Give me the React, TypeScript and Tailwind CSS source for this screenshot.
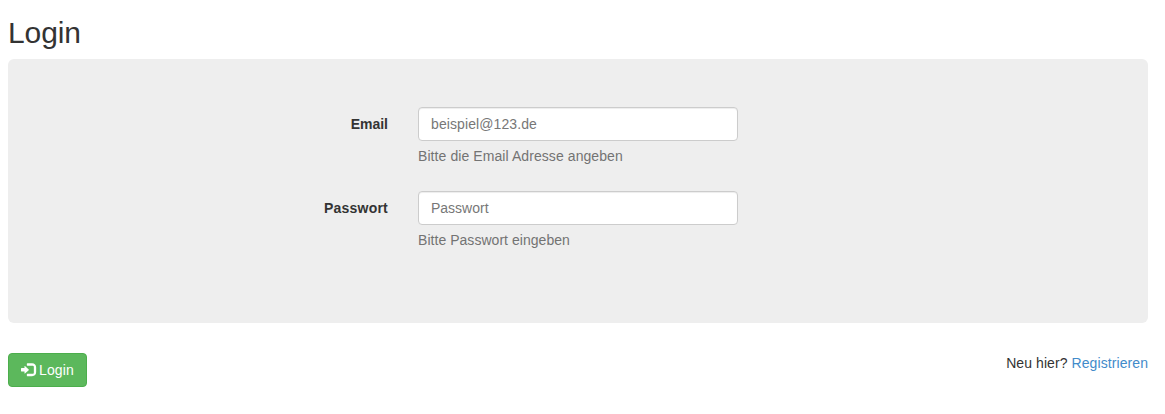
import React from "react";

function Field({ id, label, labelClass, hint, hintClass, type, placeholder, inputClass }: { id: string; label: string; labelClass: string; hint: string; hintClass: string; type: string; placeholder: string; inputClass: string }) {
  return (
    <div className="flex h-[69px]">
      <label htmlFor={id} className={`w-[380px] pt-[7px] text-right font-bold text-[#333] ${labelClass}`}>{label}</label>
      <div className="ml-[30px] w-[320px]">
        <input
          id={id}
          type={type}
          placeholder={placeholder}
          className={`block h-[34px] w-full rounded border border-[#ccc] bg-white px-3 py-1.5 text-[14px] text-[#555] shadow-[inset_0_1px_1px_rgba(0,0,0,0.075)] outline-none placeholder:text-[#777] ${inputClass}`}
        />
        <span className={`mt-[5px] block text-[#737373] ${hintClass}`}>{hint}</span>
      </div>
    </div>
  );
}

export default function App() {
  return (
    <main className="h-[414px] bg-white px-2 pt-4 font-['Liberation_Sans',Arial,sans-serif] text-[14px] leading-5 text-[#333]">
      <h1 className="mb-[10px] h-[33px] text-[30px] leading-[33px] font-medium tracking-[-0.1px]">Login</h1>
      <form className="w-[1140px]">
        <div className="flex h-[264px] flex-col gap-[15px] rounded-md bg-[#eee] pt-12">
          <Field id="email" label="Email" labelClass="tracking-normal" hint="Bitte die Email Adresse angeben" hintClass="tracking-[0.08px]" type="email" placeholder="beispiel@123.de" inputClass="tracking-[0.1px]" />
          <Field id="password" label="Passwort" labelClass="tracking-[0.22px]" hint="Bitte Passwort eingeben" hintClass="tracking-[0.04px]" type="password" placeholder="Passwort" inputClass="tracking-normal" />
        </div>
        <div className="mt-[30px] flex items-start justify-between">
          <button type="button" className="flex h-[34px] w-[79px] items-center gap-[4px] rounded border border-[#4cae4c] bg-[#5cb85c] pl-3 text-white">
            <svg viewBox="0 0 1200 1200" className="h-[14px] w-[14px] shrink-0 overflow-visible" fill="currentColor" aria-hidden="true">
              <path transform="translate(0 1130) scale(1 -1)" d="M550 1100h400q165 0 257.5 -92.5t92.5 -257.5v-400q0 -165 -92.5 -257.5t-257.5 -92.5h-400q-21 0 -35.5 14.5t-14.5 35.5v100q0 21 14.5 35.5t35.5 14.5h450q41 0 70.5 29.5t29.5 70.5v500q0 41 -29.5 70.5t-70.5 29.5h-450q-21 0 -35.5 14.5t-14.5 35.5v100q0 21 14.5 35.5t35.5 14.5zM338 867l324 -284q16 -14 16 -33t-16 -33l-324 -284q-16 -14 -27 -9t-11 26v150h-250q-21 0 -35.5 14.5t-14.5 35.5v200q0 21 14.5 35.5t35.5 14.5h250v150q0 21 11 26t27 -9z" />
            </svg>
            <span className="tracking-[0.15px]">Login</span>
          </button>
          <p className="tracking-[0.08px]">Neu hier? <a href="#" className="text-[#428bca]">Registrieren</a></p>
        </div>
      </form>
    </main>
  );
}
